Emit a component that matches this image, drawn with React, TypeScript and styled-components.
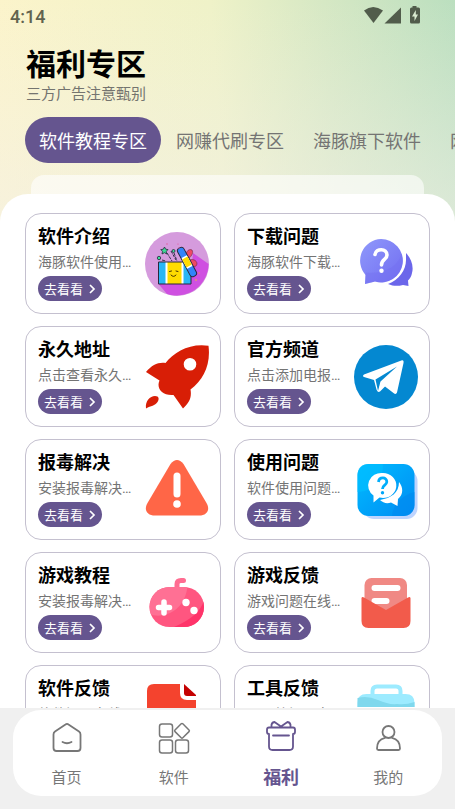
import React from "react";
import styled, { createGlobalStyle } from "styled-components";

const GlobalStyle = createGlobalStyle`
  *, *::before, *::after { box-sizing: border-box; }
  body { margin: 0; background: #f0f0f0; }
  body, button { font-family: Roboto, "Noto Sans CJK SC", sans-serif; }
  h1, h2, p { margin: 0; }
`;

const Screen = styled.div`
  height: 100vh;
  display: flex;
  flex-direction: column;
  overflow: hidden;
  background: #f0f0f0;
`;

const Content = styled.div`
  flex: 1;
  min-height: 0;
  overflow: hidden;
  background:
    linear-gradient(to bottom, rgba(243, 240, 234, 0) 0, rgba(243, 240, 234, 0.6) 100%),
    linear-gradient(86deg, #fcf4cb 0%, #eff2c8 48%, #d6e8c4 72%, #bbdfbf 100%);
  background-size: 100% 230px;
  background-repeat: no-repeat;
`;

const StatusBar = styled.div`
  display: flex;
  align-items: center;
  justify-content: space-between;
  height: 32px;
  padding: 0 34px 0 10px;
  color: #62634f;
  font-size: 18px;
  font-weight: 500;
`;

const Header = styled.header`
  padding: 15px 26px 11px;
`;

const PageTitle = styled.h1`
  font-size: 30px;
  line-height: 36px;
  font-weight: 700;
  color: #000;
`;

const Subtitle = styled.p`
  font-size: 15px;
  line-height: 23px;
  color: #74746f;
`;

const Tabs = styled.div`
  display: flex;
  gap: 1px;
  padding-left: 25px;
  overflow: hidden;
`;

const Tab = styled.button<{ $active?: boolean }>`
  flex: none;
  height: 46px;
  padding: 0 14px;
  border: 0;
  border-radius: 23px;
  background: ${(p) => (p.$active ? "#65558f" : "transparent")};
  color: ${(p) => (p.$active ? "#fff" : "#747473")};
  font-size: 18px;
`;

const SheetBack = styled.div`
  height: 19px;
  margin: 12px 31px 0;
  border-radius: 13px 13px 0 0;
  background: rgba(255, 255, 255, 0.6);
`;

const Sheet = styled.main`
  display: grid;
  grid-template-columns: repeat(2, minmax(0, 1fr));
  gap: 12px 13px;
  padding: 19px 25px;
  border-radius: 28px 28px 0 0;
  background: #fff;
`;

const Card = styled.article`
  display: flex;
  align-items: center;
  gap: 10px;
  padding: 12px 11px 12px 12px;
  border: 1px solid #c4c0cf;
  border-radius: 16px;
`;

const CardBody = styled.div`
  flex: 1;
  min-width: 0;
  display: flex;
  flex-direction: column;
  align-items: flex-start;
  gap: 4px;
  white-space: nowrap;
`;

const CardTitle = styled.h2`
  font-size: 18px;
  line-height: 22px;
  font-weight: 700;
  color: #000;
`;

const CardText = styled.p`
  font-size: 14px;
  line-height: 20px;
  color: #747474;
`;

const GoButton = styled.button`
  display: flex;
  align-items: center;
  gap: 4px;
  height: 25px;
  padding: 0 5px 0 6px;
  border: 0;
  border-radius: 13px;
  background: #65558f;
  color: #fff;
  font-size: 13px;
`;

const Art = styled.svg`
  flex: none;
  width: 64px;
  height: 64px;
`;

const NavArea = styled.nav`
  flex: none;
  padding: 2px 13px 13px;
  background: #f0f0f0;
`;

const NavPanel = styled.div`
  display: grid;
  grid-template-columns: repeat(4, 1fr);
  height: 86px;
  border-radius: 28px;
  background: #fff;
`;

const NavLink = styled.a<{ $active?: boolean }>`
  display: flex;
  flex-direction: column;
  align-items: center;
  gap: 12px;
  padding-top: 12px;
  text-decoration: none;
  line-height: 24px;
  color: ${(p) => (p.$active ? "#65558f" : "#777")};
  font-size: ${(p) => (p.$active ? "18px" : "15px")};
  font-weight: ${(p) => (p.$active ? 700 : 400)};
`;

const NavSvg = styled.svg`
  width: 32px;
  height: 32px;
  overflow: visible;
  fill: none;
  stroke: currentColor;
  stroke-width: 1.8;
  stroke-linecap: round;
  stroke-linejoin: round;
`;

const GiftBox = () => (
  <Art viewBox="0 0 64 64" aria-hidden="true">
    <circle cx="32" cy="32" r="32" fill="#d59bdd" />
    <path d="M48 21L63.6 32A32 32 0 0 1 22 62L13.5 52L45 50Z" fill="#cf50e1" />
    <path d="M13.5 30H46V52H13.5Z" fill="#29b6f6" />
    <path d="M20.5 30H38.5V52H20.5Z" fill="#fff" />
    <path d="M22.5 30H36.5V52H22.5Z" fill="#ffdc00" />
    <path d="M13.5 30H46V52H13.5Z" fill="none" stroke="#28283d" strokeWidth="1" />
    <path d="M17 28L21 29M22 21L27 29M26 19L31 28M29 21L32 29" stroke="#30304a" strokeDasharray="3 1" />
    <path d="M19.500 15L20.700 17.200L23 17.600L21.300 19.300L21.700 22L19.500 20.700L17 22L17.500 19.300L15.800 17.600L18.300 17.200Z" fill="#3ddc97" stroke="#28283d" strokeWidth=".8" />
    <circle cx="14" cy="26" r="1.700" fill="#3ddc97" stroke="#28283d" strokeWidth=".8" />
    <circle cx="28.500" cy="19" r="1.500" fill="#3ddc97" stroke="#28283d" strokeWidth=".8" />
    <path d="M41 27C40 21 43 16 47 18C49 21 46 25 42 28ZM43 29C47 26 52 28 52 32C51 36 47 35 44 31Z" fill="#ee4964" stroke="#6b294f" strokeWidth=".6" />
    <g transform="translate(42 30) rotate(62)">
      <rect x="-16" y="-3.500" width="32" height="7" rx="3" fill="#3284fa" stroke="#28283d" />
      <path d="M-6-3H6V3H-6Z" fill="#fff" />
      <path d="M-4.500-3H4.500V3H-4.500Z" fill="#ffdc00" />
    </g>
    <path d="M24.500 39.500L26.500 39M31 39L33 39.500M26 43Q28.500 46 31 43" fill="none" stroke="#493500" strokeLinecap="round" />
    <g fill="#e05592">
      <circle cx="22" cy="12" r=".7" /><circle cx="34" cy="16" r=".7" /><circle cx="33" cy="12" r=".6" />
      <circle cx="51" cy="48" r=".7" fill="#ffdc00" /><circle cx="54" cy="41" r=".7" fill="#ff9f32" />
    </g>
  </Art>
);

const DownloadHelp = () => (
  <Art viewBox="0 0 64 64" aria-hidden="true">
    <defs>
      <linearGradient id="violet" x1="0" y1="0" x2="1" y2="1">
        <stop offset="0" stopColor="#8f99fb" /><stop offset="1" stopColor="#716cf1" />
      </linearGradient>
    </defs>
    <path d="M52 21C57 26 60 34 58 41C57.500 44 56 46.500 54 48.500L54.500 54L49 53C43 54.500 39 54 34 52C45 48 52 38 52 28Z" fill="#6b66ea" />
    <path d="M27 7A21.700 21.700 0 1 1 21 49.500L11 52L11.500 43A21.700 21.700 0 0 1 27 7Z" fill="url(#violet)" />
    <path d="M47.500 22C43 36 29 42 12 40.500L11.500 43L11 52L21 49.500A21.700 21.700 0 0 0 47.500 22Z" fill="#746ff1" opacity=".4" />
    <path d="M21 22.500C22 16 33 16 33 23C33 28 27.500 27 27.500 33" fill="none" stroke="#fff" strokeWidth="3.600" strokeLinecap="round" />
    <circle cx="27.500" cy="38.700" r="2.200" fill="#fff" />
  </Art>
);

const Rocket = () => (
  <Art viewBox="0 0 64 64" aria-hidden="true">
    <path fillRule="evenodd" fill="#d81e06" d="M63.500 .8C45 -2 29 7 20.500 18C13 17 7 20 1 27L14.500 35.500C11 43 17 51 28.500 50L38 63.500C44 58 47 53 45.500 44.500C58 35 66 20 63.500 .8ZM45 13A6.300 6.300 0 1 1 45 25.600A6.300 6.300 0 0 1 45 13Z" />
    <path fill="#d81e06" d="M1 63.500C0 56 5 51 10 51C14 51 14.500 54 12.500 57C10 61 6 60.500 1 63.500Z" />
  </Art>
);

const PaperPlane = () => (
  <Art viewBox="0 0 64 64" aria-hidden="true">
    <circle cx="32" cy="32" r="32" fill="#0488d1" />
    <path fill="#fff" d="M10 29.500L48 15.300Q50 15 49.500 18L43 47.500Q42 50 39.500 48L31 41.500L26 46.500Q23.500 48 22.500 44.500L20 35L10 32Q8 31 10 29.500Z" />
    <path fill="#0488d1" d="M21.500 34.500L43 21.500L26.500 36.500L24 46Z" />
    <path fill="#fff" d="M25 44L27 37L31 41Z" />
  </Art>
);

const Warning = () => (
  <Art viewBox="0 0 64 64" aria-hidden="true">
    <path d="M25.500 6Q32-2 38.500 6L61.500 45C65.500 52 62 57.500 54 57.500H10C2 57.500-1.500 52 2.500 45Z" fill="#ff6647" />
    <path d="M32 18V36" stroke="#fff" strokeWidth="7" strokeLinecap="round" />
    <circle cx="32" cy="46" r="3.800" fill="#fff" />
  </Art>
);

const UsageHelp = () => (
  <Art viewBox="0 0 64 64" aria-hidden="true">
    <defs>
      <linearGradient id="azure" x1="0" y1="0" x2="1" y2="1">
        <stop offset="0" stopColor="#00bcff" /><stop offset="1" stopColor="#008cf3" />
      </linearGradient>
    </defs>
    <rect x="9" y="12" width="54.500" height="49" rx="11" fill="#bed4fe" />
    <rect x="3.500" y="6" width="57" height="52" rx="11" fill="url(#azure)" />
    <path d="M29 6Q29 32 3.500 34V17Q4 6 15 6Z" fill="#00bdff" opacity=".7" />
    <path d="M60.500 34Q40 40 38 58H50Q60 57 60.500 47Z" fill="#008bf0" opacity=".65" />
    <path d="M45 24C49 29 50 36 44 41L43.500 48L37 44.500C33 46 29 45 26 42C37 40 45 35 45 24Z" fill="#fff" />
    <path d="M28.500 15A13.200 12.500 0 1 1 25.500 39.500L19.500 44.500V37.500A13.200 12.500 0 0 1 28.500 15Z" fill="#fff" />
    <path d="M24.500 24C25 18.500 33 18.500 32.800 24C32.500 27.500 28.500 27 28.500 31" fill="none" stroke="#00aefb" strokeWidth="2.800" />
    <circle cx="28.500" cy="34.700" r="1.700" fill="#00a5f8" />
  </Art>
);

const GamePad = () => (
  <Art viewBox="0 0 64 64" aria-hidden="true">
    <defs>
      <clipPath id="pad"><rect x="4.500" y="16" width="54.500" height="40" rx="20" /></clipPath>
    </defs>
    <path d="M32 17V13Q32 9.500 36 9.500H38.500" fill="none" stroke="#ff6c91" strokeWidth="5" strokeLinecap="round" />
    <g clipPath="url(#pad)">
      <path d="M0 10H64V60H0Z" fill="#ff5680" />
      <path d="M0 10H43Q42 34 25 42Q14 47 4 43Z" fill="#ff7094" />
      <path d="M59 29Q55 45 29 56H60Z" fill="#ff346a" />
    </g>
    <path d="M19 31V42M13.500 36.500H24.500" stroke="#fff" strokeWidth="5.500" strokeLinecap="round" />
    <circle cx="41" cy="31.500" r="3.700" fill="#fff" /><circle cx="49" cy="39.500" r="3.700" fill="#fff" />
  </Art>
);

const Letter = () => (
  <Art viewBox="0 0 64 64" aria-hidden="true">
    <rect x="10.500" y="7" width="42.500" height="44" rx="7" fill="#f08984" />
    <path d="M20.500 17H43.500M20.500 30H32.500" stroke="#fff" strokeWidth="6" strokeLinecap="round" />
    <path d="M7.500 27Q8 25.500 10 26.500L32 39L54 26.500Q56 25.500 56.500 27V50Q56.500 57 49.500 57H14.500Q7.500 57 7.500 50Z" fill="#f25b4b" />
  </Art>
);

const RedDocument = () => (
  <Art viewBox="0 0 64 64" aria-hidden="true">
    <path d="M9 0H35V9Q35 16 42 16H51V57Q51 64 44 64H9Q2 64 2 57V7Q2 0 9 0Z" fill="#f4432e" />
    <path d="M39 0L51 11V12H42Q39 12 39 9Z" fill="#c40101" />
    <path d="M13 26H34M13 38H40" stroke="#fff" strokeWidth="4" strokeLinecap="round" />
  </Art>
);

const ToolCase = () => (
  <Art viewBox="0 0 64 64" aria-hidden="true">
    <path d="M18.500 12V7Q18.500 2.500 23 2.500H42Q46.500 2.500 46.500 7V12" fill="none" stroke="#9debff" strokeWidth="4" />
    <path d="M3.500 23V19Q3.500 10 12.500 10H51.500Q60.500 10 60.500 19V23Z" fill="#9debff" />
    <path d="M3.500 23V14Q13 11 24 16T43 20Q52 21 60.500 18V23Z" fill="#80d8ed" />
    <path d="M3.500 27H60.500V51Q60.500 60 51.500 60H12.500Q3.500 60 3.500 51Z" fill="#9debff" />
  </Art>
);

const entries = [
  { title: "软件介绍", text: "海豚软件使用…", Icon: GiftBox },
  { title: "下载问题", text: "海豚软件下载…", Icon: DownloadHelp },
  { title: "永久地址", text: "点击查看永久…", Icon: Rocket },
  { title: "官方频道", text: "点击添加电报…", Icon: PaperPlane },
  { title: "报毒解决", text: "安装报毒解决…", Icon: Warning },
  { title: "使用问题", text: "软件使用问题…", Icon: UsageHelp },
  { title: "游戏教程", text: "安装报毒解决…", Icon: GamePad },
  { title: "游戏反馈", text: "游戏问题在线…", Icon: Letter },
  { title: "软件反馈", text: "软件问题在线…", Icon: RedDocument },
  { title: "工具反馈", text: "工具箱问题在…", Icon: ToolCase },
];

const tabs = ["软件教程专区", "网赚代刷专区", "海豚旗下软件", "网"];

const navItems = [
  {
    label: "首页",
    drawing: <path d="M14.500 2.500Q16 1.300 17.500 2.500L28 9.500Q29.500 10.500 29.500 12.500V26Q29.500 29 26.500 29H5.500Q2.500 29 2.500 26V12.500Q2.500 10.500 4 9.500ZM11.500 20Q16 22.500 20.500 20" />,
  },
  {
    label: "软件",
    drawing: (
      <g strokeWidth="1.500">
        <rect x="1.500" y="2" width="13" height="13" rx="2.500" />
        <rect x="1.500" y="18" width="13" height="13" rx="2.500" />
        <rect x="17.500" y="18" width="13" height="13" rx="2.500" />
        <path d="M23.200 1.800Q24 1 24.800 1.800L31 8Q31.800 8.800 31 9.600L24.800 15.800Q24 16.600 23.200 15.800L17 9.600Q16.200 8.800 17 8Z" />
      </g>
    ),
  },
  {
    label: "福利",
    active: true,
    drawing: <path d="M4 5.500H28Q30 5.500 30 7.500V10Q30 12 28 12V24.500Q28 28 24.500 28H7.500Q4 28 4 24.500V12Q2 12 2 10V7.500Q2 5.500 4 5.500ZM8 13.500H24M16 4.500L9.500 0Q6 .5 6.500 5M16 4.500L22.500 0Q26 .5 25.500 5" />,
  },
  {
    label: "我的",
    drawing: <><circle cx="16.500" cy="10" r="6" /><path d="M13 15.800Q5 17.500 5 26.500Q5 28 6.500 28H26.500Q28 28 28 26.500Q28 17.500 20 15.800" /></>,
  },
];

export default function App() {
  return (
    <Screen>
      <GlobalStyle />
      <Content>
        <StatusBar>
          <span>4:14</span>
          <svg width="58" height="20" viewBox="0 0 58 20" fill="#515c4b" aria-hidden="true">
            <path d="M1 4.500Q10-2.500 20 4.500L10.500 17Z" />
            <path d="M21.500 17.500L38 1.500V17.500Z" />
            <path d="M49.500 0H53.500V1.500H55.500Q57 1.500 57 3V16Q57 17.500 55.500 17.500H48.500Q47 17.500 47 16V3Q47 1.500 48.500 1.500H49.500Z" />
            <path d="M52.800 4L49 10.500H51.500V15L55 8.500H52.800Z" fill="#d9ead0" />
          </svg>
        </StatusBar>
        <Header>
          <PageTitle>福利专区</PageTitle>
          <Subtitle>三方广告注意甄别</Subtitle>
        </Header>
        <Tabs role="tablist">
          {tabs.map((tab, i) => (
            <Tab key={tab} role="tab" aria-selected={i === 0} $active={i === 0}>{tab}</Tab>
          ))}
        </Tabs>
        <SheetBack />
        <Sheet>
          {entries.map(({ title, text, Icon }) => (
            <Card key={title}>
              <CardBody>
                <CardTitle>{title}</CardTitle>
                <CardText>{text}</CardText>
                <GoButton>
                  去看看
                  <svg width="10" height="12" viewBox="0 0 10 12" fill="none" stroke="currentColor" strokeWidth="1.700" aria-hidden="true">
                    <path d="M3 2L7 6L3 10" />
                  </svg>
                </GoButton>
              </CardBody>
              <Icon />
            </Card>
          ))}
        </Sheet>
      </Content>
      <NavArea>
        <NavPanel>
          {navItems.map(({ label, active, drawing }) => (
            <NavLink key={label} href="#" $active={active} aria-current={active ? "page" : undefined}>
              <NavSvg viewBox="0 0 32 32" aria-hidden="true">{drawing}</NavSvg>
              {label}
            </NavLink>
          ))}
        </NavPanel>
      </NavArea>
    </Screen>
  );
}
